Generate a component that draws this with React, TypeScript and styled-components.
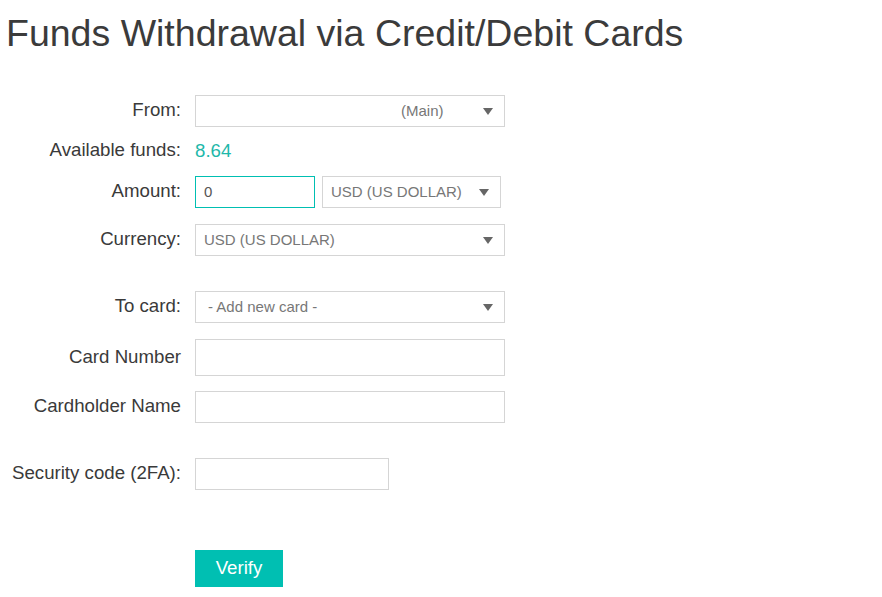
import React from 'react';
import styled, { createGlobalStyle } from 'styled-components';

const GlobalStyle = createGlobalStyle`
  body {
    margin: 0;
    background: #ffffff;
    font-family: Arial, "Liberation Sans", sans-serif;
    color: #333333;
  }
`

const Page = styled.div`
    padding: 0 0 20px 0;
`

const Title = styled.h1`
    margin: 12px 0 0 6px;
    font-size: 37.5px;
    line-height: 43px;
    font-weight: normal;
    color: #3b3b3b;
`

const Form = styled.div`
    display: flex;
    flex-direction: column;
`

const Row = styled.div<{ $mt: number }>`
    display: flex;
    align-items: center;
    gap: 14px;
    margin-top: ${p => p.$mt}px;
`

const Label = styled.div`
    width: 181px;
    text-align: right;
    font-size: 18.67px;
    line-height: 22px;
    padding-bottom: 2px;
    color: #3a3a3a;
`

const Fields = styled.div`
    display: flex;
    gap: 7px;
`

const SelectBox = styled.div<{ $w: number; $pl?: number }>`
    box-sizing: border-box;
    width: ${p => p.$w}px;
    height: 32px;
    border: 1px solid #d5d5d5;
    display: flex;
    align-items: center;
    justify-content: space-between;
    padding: 0 11px 2px ${p => p.$pl ?? 8}px;
    font-size: 15px;
    color: #777777;
`

const Arrow = styled.span`
    width: 0;
    height: 0;
    border-left: 5px solid transparent;
    border-right: 5px solid transparent;
    border-top: 7px solid #666666;
    margin-top: 3px;
`

const TextInput = styled.input<{ $w: number; $h?: number; $focus?: boolean }>`
    box-sizing: border-box;
    width: ${p => p.$w}px;
    height: ${p => p.$h ?? 32}px;
    border: 1px solid ${p => (p.$focus ? '#00bfb2' : '#d5d5d5')};
    padding: 0 8px 2px 8px;
    font-family: Arial, "Liberation Sans", sans-serif;
    font-size: 15px;
    color: #555555;
    outline: none;
    background: #ffffff;
`

const Funds = styled.div`
    font-size: 18.67px;
    line-height: 32px;
    color: #1fb8aa;
`

const VerifyButton = styled.button`
    width: 88px;
    height: 37px;
    border: none;
    background: #00bfb2;
    color: #ffffff;
    font-family: Arial, "Liberation Sans", sans-serif;
    font-size: 18.67px;
    padding: 0 0 2px 0;
    cursor: pointer;
`

function Select(props: { w: number; pl?: number; children?: React.ReactNode }) {
    return (
        <SelectBox $w={props.w} $pl={props.pl}>
            <span>{props.children}</span>
            <Arrow />
        </SelectBox>
    );
}

export default function App() {
    return (
        <Page>
            <GlobalStyle />
            <Title>Funds Withdrawal via Credit/Debit Cards</Title>
            <Form>
                <Row $mt={40}>
                    <Label>From:</Label>
                    <Select w={310} pl={205}>(Main)</Select>
                </Row>
                <Row $mt={8}>
                    <Label>Available funds:</Label>
                    <Funds>8.64</Funds>
                </Row>
                <Row $mt={9}>
                    <Label>Amount:</Label>
                    <Fields>
                        <TextInput $w={120} $focus defaultValue="0" />
                        <Select w={179}>USD (US DOLLAR)</Select>
                    </Fields>
                </Row>
                <Row $mt={16}>
                    <Label>Currency:</Label>
                    <Select w={310}>USD (US DOLLAR)</Select>
                </Row>
                <Row $mt={35}>
                    <Label>To card:</Label>
                    <Select w={310} pl={12}>- Add new card -</Select>
                </Row>
                <Row $mt={16}>
                    <Label>Card Number</Label>
                    <TextInput $w={310} $h={37} />
                </Row>
                <Row $mt={15}>
                    <Label>Cardholder Name</Label>
                    <TextInput $w={310} />
                </Row>
                <Row $mt={35}>
                    <Label>Security code (2FA):</Label>
                    <TextInput $w={194} />
                </Row>
                <Row $mt={60}>
                    <Label />
                    <VerifyButton>Verify</VerifyButton>
                </Row>
            </Form>
        </Page>
    );
}
